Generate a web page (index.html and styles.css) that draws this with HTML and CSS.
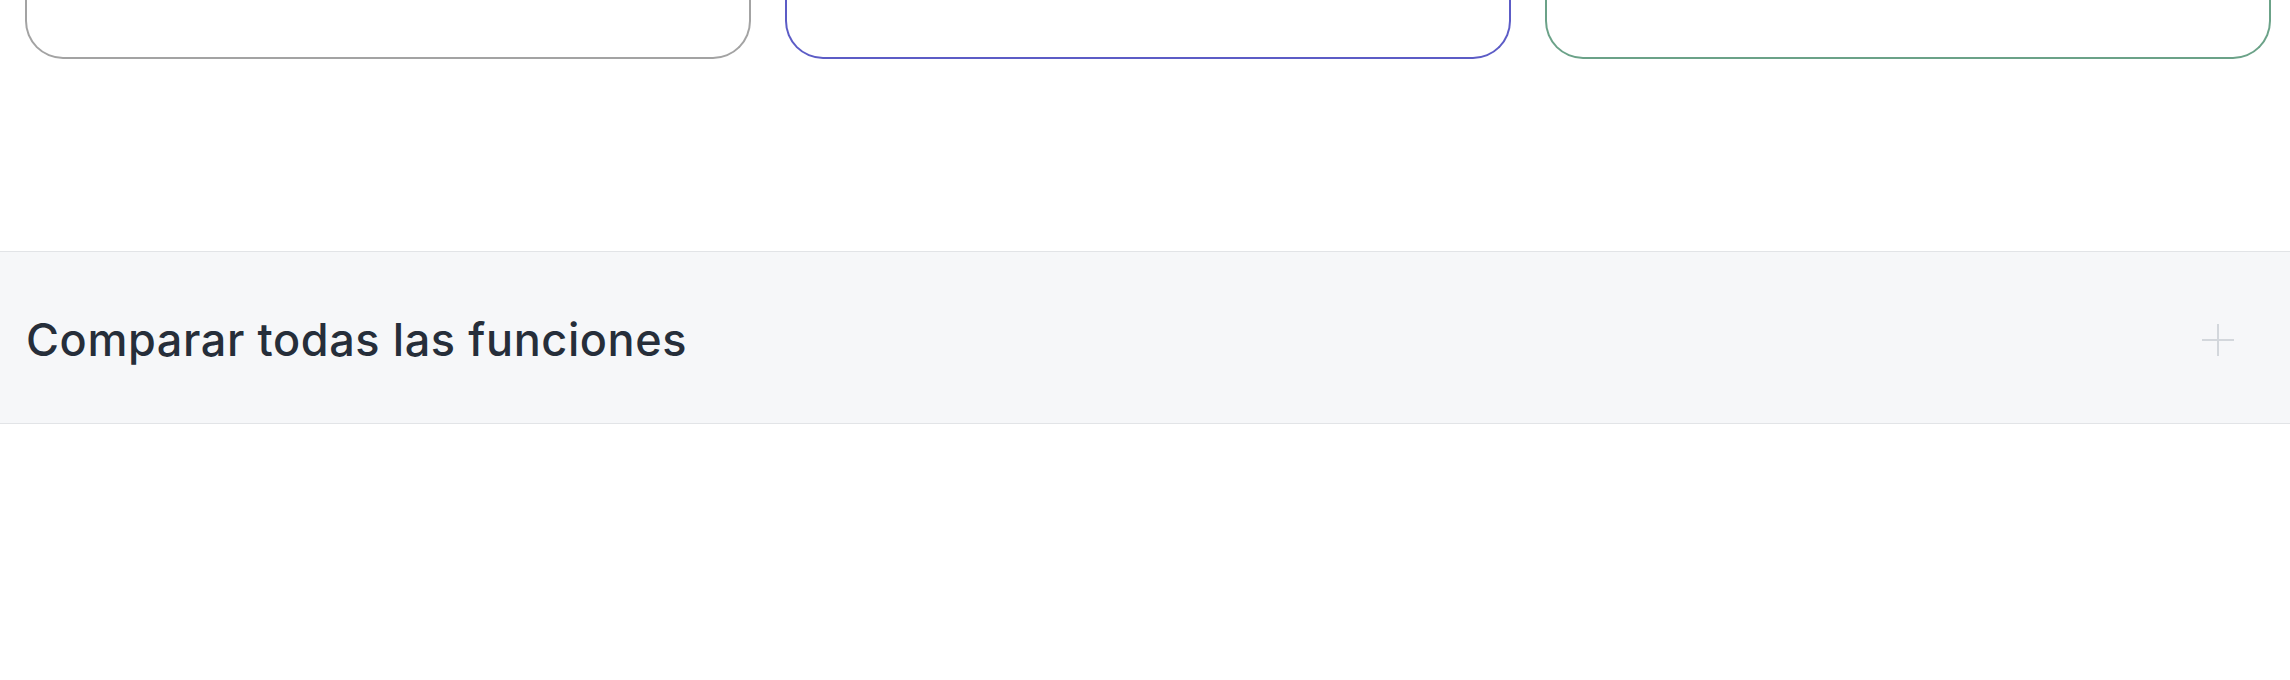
FILE: index.html
```html
<!DOCTYPE html>
<html lang="es">
<head>
<meta charset="utf-8">
<title>Comparar</title>
<link rel="stylesheet" href="styles.css">
</head>
<body>
  <div class="plans">
    <div class="card card-basic"></div>
    <div class="card card-pro"></div>
    <div class="card card-team"></div>
  </div>
  <section class="compare">
    <h2 class="compare-title">Comparar todas las funciones</h2>
    <span class="compare-toggle" aria-hidden="true">
      <svg width="32" height="32" viewBox="0 0 32 32"><path d="M16 0V32M0 16H32" stroke="#d3d7dc" stroke-width="2" fill="none"/></svg>
    </span>
  </section>
</body>
</html>
```
FILE: styles.css
```css
html, body {
  margin: 0;
  padding: 0;
  background: #ffffff;
}
body {
  font-family: Inter, "Noto Sans", sans-serif;
  width: 2290px;
  height: 680px;
  overflow: hidden;
}
.plans {
  display: flex;
  gap: 34px;
  padding: 0 19px 0 25px;
}
.card {
  flex: 1 1 0;
  height: 59px;
  box-sizing: border-box;
  border: 2px solid #a3a3a3;
  border-top: none;
  border-radius: 0 0 38px 38px;
  background: #fff;
}
.card-pro { border-color: #5c5cc6; }
.card-team { border-color: #6ba288; }
.compare {
  margin-top: 192px;
  height: 173px;
  box-sizing: border-box;
  border-top: 1px solid #e2e4e7;
  border-bottom: 1px solid #e2e4e7;
  background: #f6f7f9;
  display: flex;
  align-items: center;
  justify-content: space-between;
  padding: 0 56px 0 26px;
}
.compare-title {
  margin: 4px 0 0;
  font-size: 45px;
  font-weight: 500;
  color: #262e3a;
  letter-spacing: 0.6px;
  line-height: 1;
}
.compare-toggle {
  display: flex;
  width: 32px;
  height: 32px;
  margin-top: 4px;
}
```
